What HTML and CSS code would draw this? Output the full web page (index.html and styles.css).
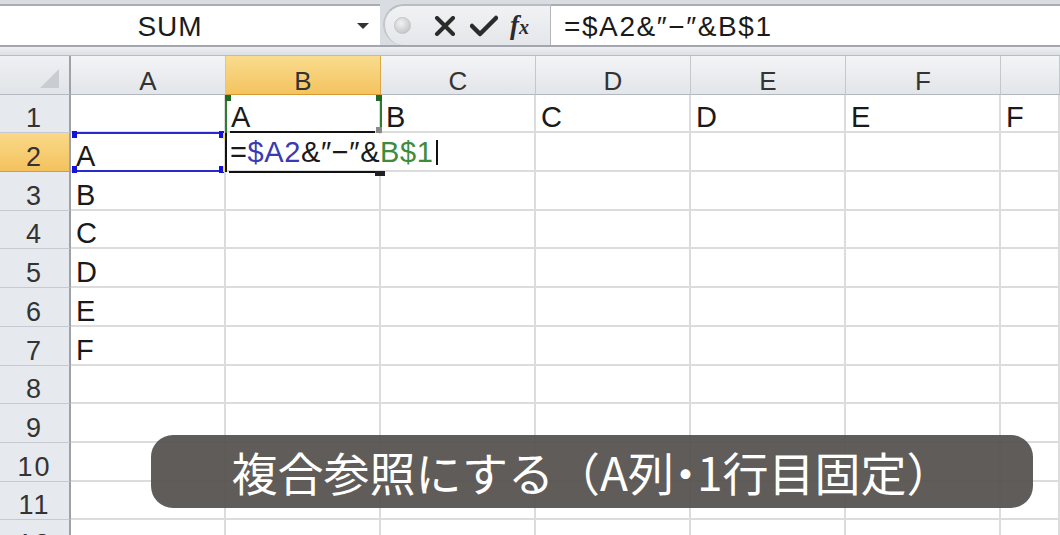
FILE: index.html
```html
<!DOCTYPE html>
<html lang="ja">
<head>
<meta charset="utf-8">
<title>Excel 複合参照</title>
<link rel="stylesheet" href="styles.css">
</head>
<body>
<div class="topbar">
  <div class="namebox">
    <span class="name">SUM</span>
    <span class="dd"></span>
  </div>
  <div class="btns">
    <span class="knob"></span>
    <svg class="ico-x" width="22" height="20" viewBox="0 0 22 20"><path d="M3 2 L19 18 M19 2 L3 18" stroke="#2b2b2b" stroke-width="4" stroke-linecap="round"/></svg>
    <svg class="ico-ok" width="28" height="22" viewBox="0 0 28 22"><path d="M2 11 L10 19 L26 3" fill="none" stroke="#2b2b2b" stroke-width="4.5" stroke-linecap="round" stroke-linejoin="round"/></svg>
    <span class="fx">f<span class="fxx">x</span></span>
  </div>
  <div class="formula">=$A2&amp;″−″&amp;B$1</div>
</div>
<div class="strip"></div>
<div class="sheet">
  <div class="corner"><span class="tri"></span></div>
  <div class="ch">A</div><div class="ch sel">B</div><div class="ch">C</div><div class="ch">D</div><div class="ch">E</div><div class="ch">F</div><div class="ch"></div>

  <div class="rh">1</div><div class="c"></div><div class="c">A</div><div class="c">B</div><div class="c">C</div><div class="c">D</div><div class="c">E</div><div class="c">F</div>
  <div class="rh sel">2</div><div class="c">A</div><div class="c"></div><div class="c"></div><div class="c"></div><div class="c"></div><div class="c"></div><div class="c"></div>
  <div class="rh">3</div><div class="c">B</div><div class="c"></div><div class="c"></div><div class="c"></div><div class="c"></div><div class="c"></div><div class="c"></div>
  <div class="rh">4</div><div class="c">C</div><div class="c"></div><div class="c"></div><div class="c"></div><div class="c"></div><div class="c"></div><div class="c"></div>
  <div class="rh">5</div><div class="c">D</div><div class="c"></div><div class="c"></div><div class="c"></div><div class="c"></div><div class="c"></div><div class="c"></div>
  <div class="rh">6</div><div class="c">E</div><div class="c"></div><div class="c"></div><div class="c"></div><div class="c"></div><div class="c"></div><div class="c"></div>
  <div class="rh">7</div><div class="c">F</div><div class="c"></div><div class="c"></div><div class="c"></div><div class="c"></div><div class="c"></div><div class="c"></div>
  <div class="rh">8</div><div class="c"></div><div class="c"></div><div class="c"></div><div class="c"></div><div class="c"></div><div class="c"></div><div class="c"></div>
  <div class="rh">9</div><div class="c"></div><div class="c"></div><div class="c"></div><div class="c"></div><div class="c"></div><div class="c"></div><div class="c"></div>
  <div class="rh">10</div><div class="c"></div><div class="c"></div><div class="c"></div><div class="c"></div><div class="c"></div><div class="c"></div><div class="c"></div>
  <div class="rh">11</div><div class="c"></div><div class="c"></div><div class="c"></div><div class="c"></div><div class="c"></div><div class="c"></div><div class="c"></div>
  <div class="rh">12</div><div class="c"></div><div class="c"></div><div class="c"></div><div class="c"></div><div class="c"></div><div class="c"></div><div class="c"></div>

  <!-- selection overlays -->
  <div class="rng-a2">
    <span class="sq sq-tl"></span><span class="sq sq-tr"></span><span class="sq sq-bl"></span><span class="sq sq-br"></span>
  </div>
  <div class="yl yl-t"></div><div class="yl yl-b"></div>
  <div class="rng-b1">
    <span class="gq gq-tl"></span><span class="gq gq-tr"></span><span class="gq gq-br"></span>
  </div>
  <div class="act-top"></div>
  <div class="act-left"></div>
  <div class="act-bottom"></div>
  <div class="handle"></div>
  <div class="edit">=<span class="ref-a">$A2</span>&amp;″−″&amp;<span class="ref-b">B$1</span><span class="caret"></span></div>

  <div class="caption">複合参照にする（A列<span class="dot">・</span>1行目固定）</div>
</div>
</body>
</html>
```
FILE: styles.css
```css
* { box-sizing: border-box; }
html, body { margin: 0; padding: 0; }
body {
  width: 1060px;
  height: 535px;
  overflow: hidden;
  background: #ffffff;
  font-family: "Liberation Sans", Arial, sans-serif;
  color: #1a1a1a;
}

/* formula bar */
.topbar {
  display: flex;
  height: 47px;
  padding-top: 4px;
  background: #d9dce1;
  border-bottom: 2px solid #a3a7ad;
}
.namebox {
  width: 380px;
  background: #ffffff;
  border-top: 2px solid #a9adb3;
  display: flex;
  align-items: center;
}
.name {
  width: 340px;
  text-align: center;
  font-size: 28px;
  line-height: 28px;
  padding-top: 2px;
  letter-spacing: 1px;
  color: #1a1a1a;
}
.dd {
  width: 0; height: 0;
  margin-left: 17px;
  border-left: 6px solid transparent;
  border-right: 6px solid transparent;
  border-top: 6px solid #333;
}
.btns {
  width: 168px;
  margin-left: 3px;
  border-top: 2px solid #b9bdc3;
  border-left: 2px solid #c3c7cd;
  border-radius: 22px 0 0 22px;
  background: linear-gradient(#f1f2f4, #e4e6ea);
  border-right: 1px solid #b3b7bd;
  display: flex;
  align-items: center;
  padding-left: 9px;
}
.knob {
  width: 17px; height: 17px;
  border-radius: 50%;
  background: radial-gradient(circle at 40% 35%, #f2f2f2, #b7babe);
  border: 1px solid #c2c5ca;
}
.ico-x { margin-left: 23px; }
.ico-ok { margin-left: 14px; }
.fx {
  margin-left: 12px;
  font-family: "Liberation Serif", "DejaVu Serif", serif;
  font-style: italic;
  font-weight: bold;
  font-size: 27px;
  color: #2b2b2b;
  line-height: 1;
}
.fxx { font-size: 20px; }
.formula {
  flex: 1;
  background: #ffffff;
  border-top: 2px solid #a9adb3;
  padding-left: 13px;
  font-size: 28px;
  line-height: 28px;
  padding-top: 7px;
  color: #1a1a1a;
  letter-spacing: 1.6px;
}
.strip {
  height: 9px;
  background: linear-gradient(#eef0f3, #dcdfe4);
  border-bottom: 1px solid #b9bdc3;
}

/* sheet grid */
.sheet {
  position: relative;
  display: grid;
  grid-template-columns: 71px repeat(6, 155px) 1fr;
  grid-template-rows: repeat(13, 38.7px);
}
.corner {
  position: relative;
  background: linear-gradient(#eef0f3, #e1e4e8);
  border-right: 2px solid #9da2a9;
  border-bottom: 1px solid #b5b9c0;
}
.tri {
  position: absolute;
  right: 10px;
  bottom: 6px;
  width: 0; height: 0;
  border-left: 19px solid transparent;
  border-bottom: 19px solid #c9ccd1;
}
.ch {
  background: linear-gradient(#f3f4f6, #e2e5e9);
  border-right: 1px solid #c4c8ce;
  border-bottom: 1px solid #b3b7be;
  display: flex;
  align-items: flex-end;
  justify-content: center;
  font-size: 26px;
  line-height: 26px;
  color: #333;
}
.ch.sel {
  background: linear-gradient(#f9dc8e, #f4c35f);
  border-bottom: 1px solid #d79b34;
  border-right: 1px solid #d9a84a;
}
.rh {
  background: #e6e9ed;
  border-right: 2px solid #9da2a9;
  border-bottom: 1px solid #c6cad0;
  display: flex;
  align-items: flex-end;
  justify-content: center;
  font-size: 27px;
  line-height: 28px;
  letter-spacing: 2px;
  color: #333;
}
.rh.sel {
  background: linear-gradient(#f9d988, #f4c25e);
  border-bottom: 1px solid #d79b34;
}
.c {
  border-right: 2px solid #dcdcdc;
  border-bottom: 2px solid #dcdcdc;
  display: flex;
  align-items: flex-end;
  padding-left: 5px;
  font-size: 29px;
  line-height: 28px;
  color: #1a1a1a;
  white-space: nowrap;
}

/* selection overlays */
.rng-a2 {
  position: absolute;
  left: 72px;
  top: 75.6px;
  width: 152px;
  height: 40.5px;
  border-top: 2px solid #2a2acc;
  border-bottom: 2px solid #2a2acc;
}
.sq {
  position: absolute;
  width: 5px; height: 7px;
  background: #1414d8;
}
.sq-tl { left: 0; top: -3px; }
.sq-tr { right: 0; top: -3px; }
.sq-bl { left: 0; bottom: -3px; }
.sq-br { right: 0; bottom: -3px; }
.yl {
  position: absolute;
  left: 223px;
  width: 4px;
  height: 6px;
  background: #f3e23a;
}
.yl-t { top: 77px; }
.yl-b { top: 110px; }
.rng-b1 {
  position: absolute;
  left: 225px;
  top: 38.7px;
  width: 157px;
  height: 38.7px;
  border-left: 2px solid #2f7d32;
  border-right: 2px solid #2f7d32;
}
.gq {
  position: absolute;
  width: 6px; height: 6px;
  background: #1e6b22;
}
.gq-tl { left: -2px; top: 0; }
.gq-tr { right: -2px; top: 0; }
.gq-br { right: -2px; bottom: 0; background: #8b8b8b; }
.act-top {
  position: absolute;
  left: 230px;
  top: 75.4px;
  width: 145px;
  height: 2px;
  background: #111;
}
.act-left {
  position: absolute;
  left: 225px;
  top: 77.4px;
  width: 2px;
  height: 38.7px;
  background: #111;
}
.act-bottom {
  position: absolute;
  left: 229px;
  top: 114.6px;
  width: 146px;
  height: 2.5px;
  background: #111;
}
.handle {
  position: absolute;
  left: 375px;
  top: 115px;
  width: 10px;
  height: 5px;
  background: #222;
}
.edit {
  position: absolute;
  left: 227px;
  top: 78px;
  width: 216px;
  height: 36px;
  background: #ffffff;
  padding-left: 3px;
  font-size: 29px;
  line-height: 36px;
  letter-spacing: 0.6px;
  white-space: nowrap;
  color: #1a1a1a;
  display: flex;
  align-items: center;
}
.ref-a { color: #3a3ab4; }
.ref-b { color: #3c8c3c; }
.caret {
  display: inline-block;
  width: 2px;
  height: 25px;
  margin-left: 2px;
  background: #111;
}

/* caption */
.caption {
  position: absolute;
  left: 151px;
  top: 379px;
  width: 882px;
  height: 73px;
  border-radius: 22px;
  background: rgba(86, 82, 79, 0.94);
  color: #ffffff;
  font-family: "Noto Sans CJK JP", "Noto Sans", sans-serif;
  font-size: 46px;
  line-height: 73px;
  text-align: center;
  white-space: nowrap;
}
.dot {
  font-feature-settings: "halt";
}
```
